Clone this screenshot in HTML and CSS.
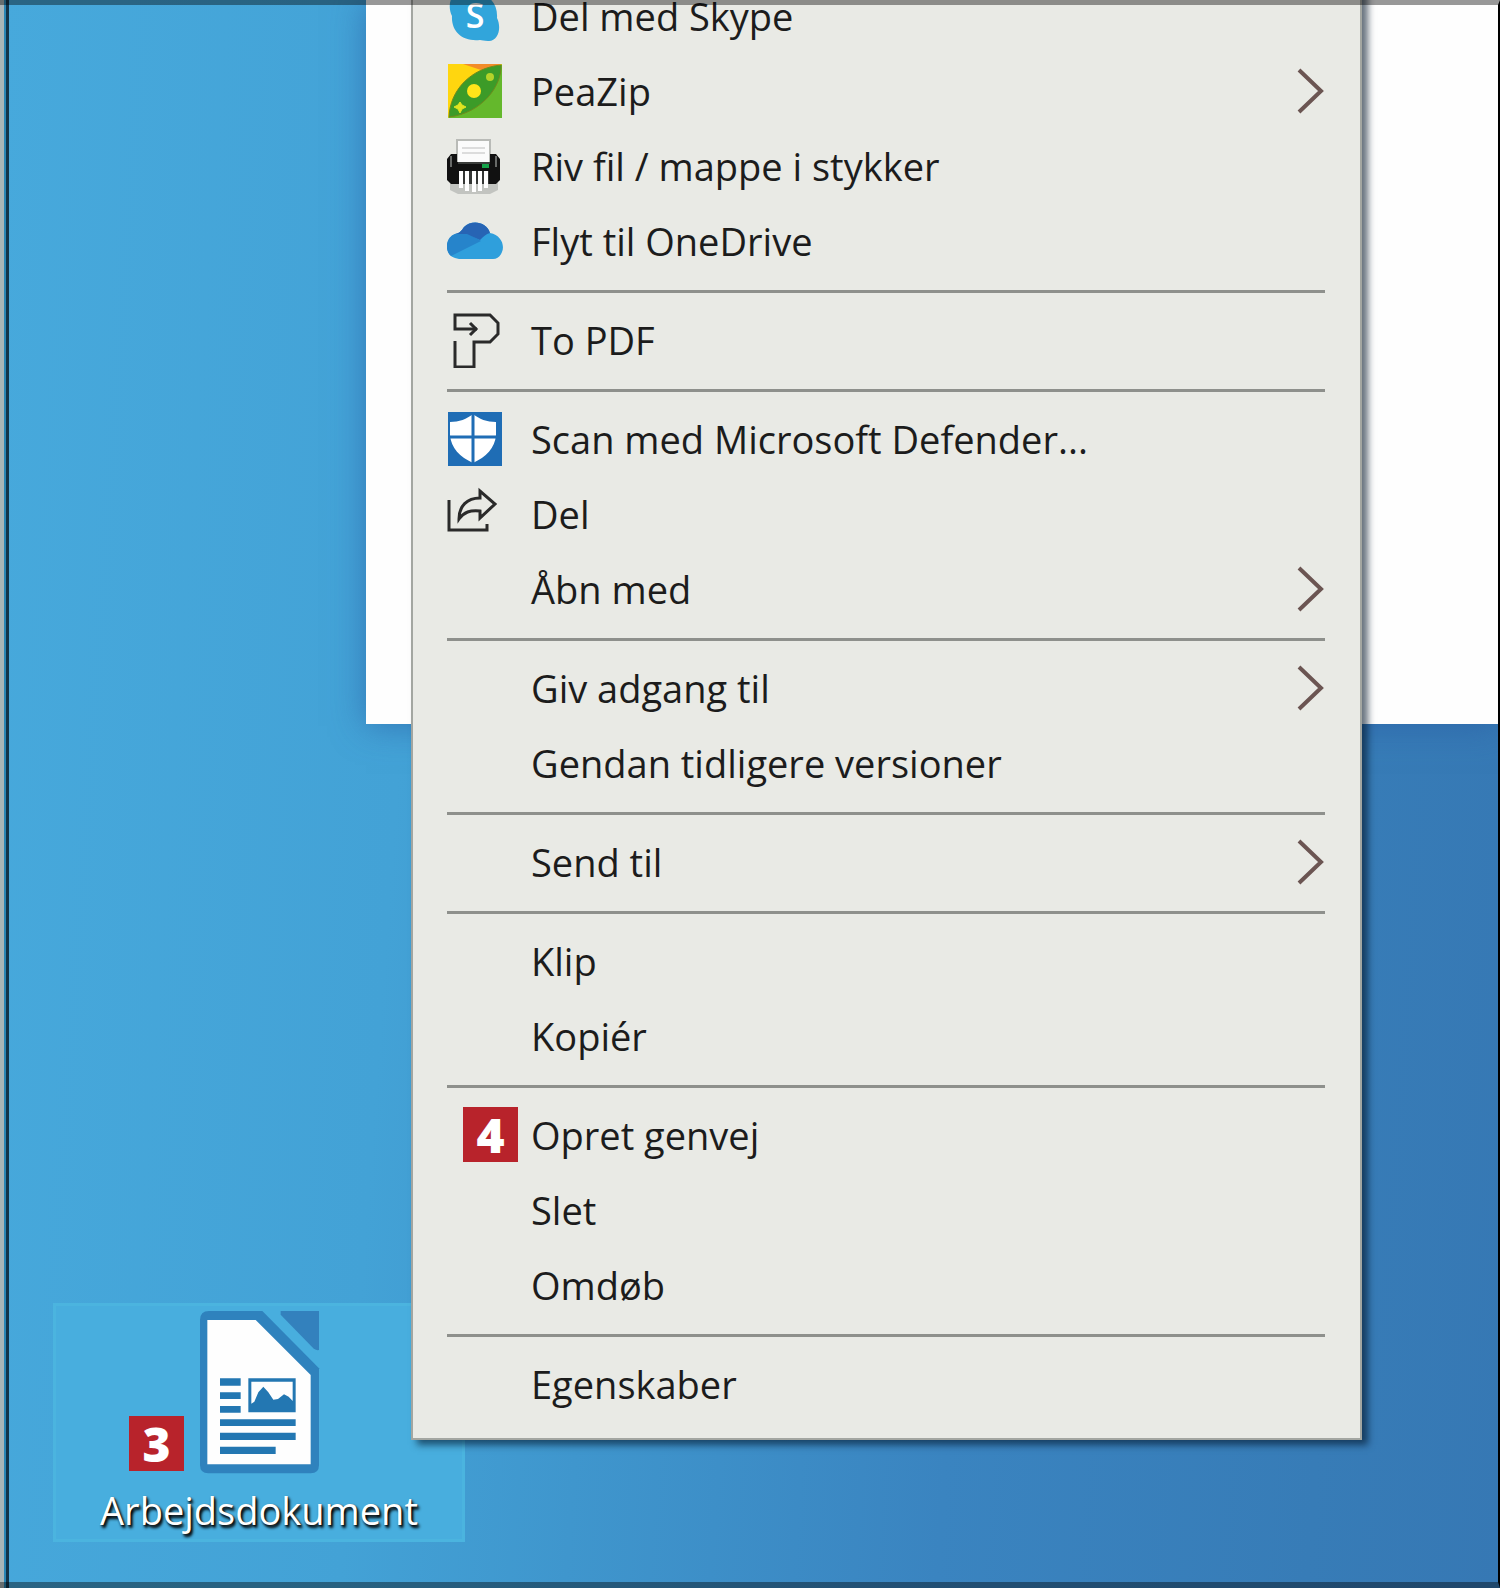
FILE: index.html
```
<!DOCTYPE html>
<html lang="da">
<head>
    <meta charset="UTF-8">
    <meta name="viewport" content="width=device-width, initial-scale=1.0">
    <title>Skrivebord</title>
    <link rel="stylesheet" href="styles.css">
</head>
<body>
    <main class="desktop">
        <!-- Åbent vindue bag menuen -->
        <div class="window"></div>

        <!-- Markeret fil på skrivebordet -->
        <a class="file" href="#">
            <svg class="file-icon" viewBox="0 0 363 492" aria-hidden="true">
                <path d="M30 3H190L360 175V465Q360 490 335 490H28Q3 490 3 465V30Q3 3 30 3Z" fill="#2f82bd"/>
                <path d="M245 3H360V120Q350 122 343 115L245 14Z" fill="#3381bd"/>
                <path d="M25 30H170L335 195V463H25Z" fill="#fefefe"/>
                <g fill="#2377b2">
                    <path d="M63 205h62v22H63zM63 247h62v20H63zM63 288h62v20H63zM63 328h227v20H63zM63 368h227v22H63zM63 410h167v22H63z"/>
                    <path d="M148 205h142v102H148z"/>
                </g>
                <path d="M157 215h124v58l-12-13-14-7-18 14-14 2-15-22-15-17-15 17-12 28-9 6z" fill="#fefefe"/>
            </svg>
            <span class="badge file-badge">3</span>
            <span class="file-name">Arbejdsdokument</span>
        </a>

        <!-- Genvejsmenu -->
        <nav class="menu" aria-label="Genvejsmenu">
            <button class="item">
                <span class="icon"><svg viewBox="0 0 56 56" aria-hidden="true">
                    <path d="M27 5C42 5 51 16 50 30C55 40 51 54 41 53C37 53 35 52 33 52C16 54 4 44 5 28C0 18 3 3 16 4C20 4 23 5 27 5Z" fill="#31a5db"/>
                    <text class="skype-s" x="28" y="40" text-anchor="middle">S</text>
                </svg></span>
                <span>Del med Skype</span>
            </button>
            <button class="item">
                <span class="icon"><svg viewBox="0 0 56 56" aria-hidden="true">
                    <path d="M1 1H55V55H1Z" fill="#64b82c"/>
                    <path d="M1 1H55L1 55Z" fill="#ffd60f"/>
                    <path d="M16 1H55L34 7Z" fill="#f28c28"/>
                    <path d="M2 54C3 27 24 5 54 2C55 23 35 50 2 54Z" fill="#3c9b28" stroke="#6f8a1c" stroke-width="1"/>
                    <circle cx="27" cy="28" r="7" fill="#ffe51a"/>
                    <circle cx="43" cy="14" r="4" fill="#b5d32a"/>
                    <path d="M13 39l2 3 4 2-4 2-2 4-2-4-4-2 4-2z" fill="#e0e420" stroke="#e0e420" stroke-width="1"/>
                </svg></span>
                <span>PeaZip</span>
                <svg class="arrow" viewBox="0 0 28 46" aria-hidden="true"><path d="M2 2L24 23L2 44"/></svg>
            </button>
            <button class="item">
                <span class="icon"><svg viewBox="0 0 56 56" aria-hidden="true">
                    <path d="M3 44h48v8l-8 4H11l-8-4z" fill="#c2c4c0"/>
                    <path d="M10 2H43V26H10Z" fill="#fbfbfb" stroke="#b9bbb7" stroke-width="2"/>
                    <path d="M15 10H38M15 15H38" stroke="#dcdcdc" stroke-width="2"/>
                    <path d="M4 16H10V24H43V16H49L53 21V42L49 46H4L0 42V21Z" fill="#111"/>
                    <path d="M4 18V29M49 18V29" stroke="#686a68" stroke-width="2"/>
                    <path d="M11 25H43" stroke="#3b3d3b" stroke-width="2"/>
                    <path d="M35 28H42" stroke="#16a34a" stroke-width="4"/>
                    <path d="M12 33H42V46H12Z" fill="#343634"/>
                    <path d="M14 33V50M20 33V53M27 33V54M33 33V53M39 33V50" stroke="#fff" stroke-width="4"/>
                </svg></span>
                <span>Riv fil / mappe i stykker</span>
            </button>
            <button class="item">
                <span class="icon"><svg viewBox="0 0 56 56" aria-hidden="true">
                    <path d="M8 45C-3 42-2 25 8 21C13 20 15 17 17 14C25 6 40 9 43 20C54 22 58 32 55 39C53 44 50 46 46 46H12Z" fill="#2f9fdc"/>
                    <path d="M4 43C-3 37-1 24 8 21L22 21L34 28L4 43Z" fill="#2684cb"/>
                    <path d="M8 21C13 20 15 17 17 14C25 6 40 9 43 20C39 21 36 24 33 27L20 21Z" fill="#2764b4"/>
                </svg></span>
                <span>Flyt til OneDrive</span>
            </button>
            <hr>
            <button class="item">
                <span class="icon"><svg viewBox="0 0 56 56" aria-hidden="true">
                    <path class="line" d="M30 17H8V3H43L51 11V22L43 30H27V55H8V29"/>
                    <path class="line" d="M23 11L29 17L23 23"/>
                </svg></span>
                <span>To PDF</span>
            </button>
            <hr>
            <button class="item">
                <span class="icon"><svg viewBox="0 0 56 56" aria-hidden="true">
                    <path d="M1 1H55V55H1Z" fill="#1f6db5"/>
                    <path d="M26 3C20 8 12 11 3 11V24C4 37 13 46 26 52C39 46 48 37 49 24V11C40 11 32 8 26 3Z" fill="#fff"/>
                    <path d="M26 2V53M2 26H50" stroke="#1f6db5" stroke-width="3"/>
                </svg></span>
                <span>Scan med Microsoft Defender...</span>
            </button>
            <button class="item">
                <span class="icon"><svg viewBox="0 0 56 56" aria-hidden="true">
                    <path class="line" d="M2 14V44H40V38"/>
                    <path class="line" d="M12 33C12 20 20 12 33 12V5L48 18L33 32V25C23 24 17 26 12 33Z"/>
                </svg></span>
                <span>Del</span>
            </button>
            <button class="item">
                <span class="icon"></span>
                <span>Åbn med</span>
                <svg class="arrow" viewBox="0 0 28 46" aria-hidden="true"><path d="M2 2L24 23L2 44"/></svg>
            </button>
            <hr>
            <button class="item">
                <span class="icon"></span>
                <span>Giv adgang til</span>
                <svg class="arrow" viewBox="0 0 28 46" aria-hidden="true"><path d="M2 2L24 23L2 44"/></svg>
            </button>
            <button class="item">
                <span class="icon"></span>
                <span>Gendan tidligere versioner</span>
            </button>
            <hr>
            <button class="item">
                <span class="icon"></span>
                <span>Send til</span>
                <svg class="arrow" viewBox="0 0 28 46" aria-hidden="true"><path d="M2 2L24 23L2 44"/></svg>
            </button>
            <hr>
            <button class="item">
                <span class="icon"></span>
                <span>Klip</span>
            </button>
            <button class="item">
                <span class="icon"></span>
                <span>Kopiér</span>
            </button>
            <hr>
            <button class="item">
                <span class="icon step"><span class="badge">4</span></span>
                <span>Opret genvej</span>
            </button>
            <button class="item">
                <span class="icon"></span>
                <span>Slet</span>
            </button>
            <button class="item">
                <span class="icon"></span>
                <span>Omdøb</span>
            </button>
            <hr>
            <button class="item">
                <span class="icon"></span>
                <span>Egenskaber</span>
            </button>
        </nav>
        <div class="frame"></div>
    </main>
</body>
</html>
```
FILE: styles.css
```
* {
    box-sizing: border-box;
}
body {
    margin: 0;
    font-family: "Open Sans", "Noto Sans", sans-serif;
}
.desktop {
    position: relative;
    display: flow-root;
    min-height: 100vh;
    overflow: hidden;
    background: linear-gradient(94deg, #47a9dc 0%, #43a2d6 28%, #3f96cd 42%, #3a84c0 65%, #377cb7 88%, #3678b4 100%);
}
.window {
    position: absolute;
    top: 0;
    left: 366px;
    right: 0;
    height: 724px;
    background: #fefefe;
    box-shadow: 0 2px 32px rgba(40, 90, 160, 0.6);
}
.menu {
    position: relative;
    margin: -22px 138px 0 411px;
    padding: 0 35px 17px 34px;
    background: #e9eae5;
    border: 2px solid #a3a6a1;
    border-top: 0;
    box-shadow: 6px 5px 7px rgba(0, 20, 40, 0.6);
}
.item {
    display: flex;
    align-items: center;
    width: 100%;
    height: 75px;
    padding: 0;
    border: 0;
    background: none;
    color: #1c1c1c;
    font-family: inherit;
    font-size: 38px;
    font-weight: 500;
    line-height: 48px;
    text-align: left;
    white-space: nowrap;
}
.icon {
    flex: none;
    display: flex;
    width: 84px;
}
.icon svg {
    width: 56px;
    height: 56px;
}
.step {
    padding-left: 16px;
}
.line {
    fill: none;
    stroke: #2a2a2a;
    stroke-width: 3;
}
.skype-s {
    fill: #fff;
    font-size: 34px;
    font-weight: 600;
}
.arrow {
    width: 28px;
    height: 46px;
    margin-left: auto;
}
.arrow path {
    fill: none;
    stroke: #6b5552;
    stroke-width: 4;
}
hr {
    height: 3px;
    margin: 12px 0 9px;
    border: 0;
    background: #8e908c;
}
.badge {
    display: block;
    width: 55px;
    height: 55px;
    background: #b8232b;
    color: #fff;
    font-size: 48px;
    font-weight: 800;
    line-height: 55px;
    text-align: center;
}
.file {
    position: absolute;
    left: 53px;
    bottom: 46px;
    width: 412px;
    height: 239px;
    padding-top: 4px;
    border: 3px solid #4bb4df;
    background: #48aede;
    color: #fff;
    text-align: center;
    text-decoration: none;
}
.file-icon {
    display: block;
    width: 121px;
    height: 164px;
    margin: 0 auto;
}
.file-badge {
    position: absolute;
    left: 73px;
    top: 110px;
}
.file-name {
    display: block;
    margin-top: 12px;
    font-size: 38px;
    font-weight: 500;
    line-height: 48px;
    text-shadow: 2px 3px 3px #000, 1px 1px 2px #222;
}
/* mørk kant rundt om hele skrivebordet */
.frame {
    position: absolute;
    inset: 0;
    border: solid rgba(0, 0, 0, 0.4);
    border-width: 5px 2px 6px 0;
    border-right-color: #000;
    background: linear-gradient(to right, #a9b6b8 0 4px, #2a86b5 4px 6px, #12344a 6px 9px, transparent 9px);
    pointer-events: none;
}
```
